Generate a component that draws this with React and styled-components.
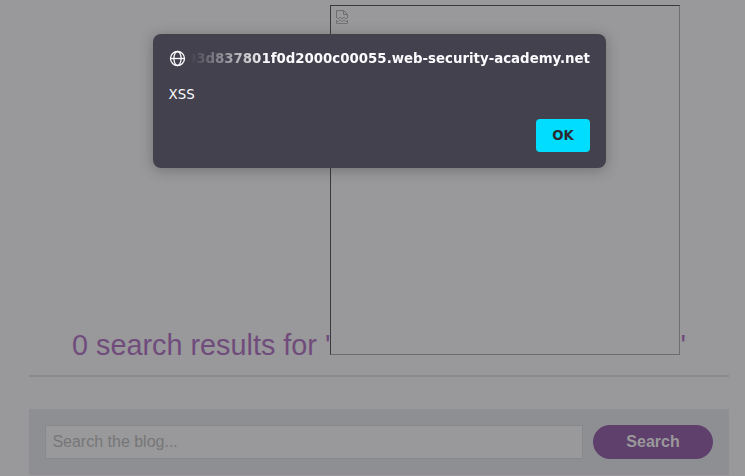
import React from "react";
import styled, { createGlobalStyle } from "styled-components";

const GlobalStyle = createGlobalStyle`
  *, *::before, *::after { box-sizing: border-box; }
  body {
    margin: 0;
    background: #99999b;
    font-family: "Liberation Sans", Arial, sans-serif;
    overflow: hidden;
  }
`;

const Page = styled.main`
  position: relative;
  height: 476px;
  padding: 5px 16px 0 29px;
  overflow: hidden;
`;

const Results = styled.header`
  display: flex;
  justify-content: center;
  align-items: flex-end;
  height: 372px;
  padding-bottom: 20px;
  border-bottom: 2px solid #89898b;
`;

const Title = styled.h1`
  margin: 0;
  display: flex;
  align-items: flex-end;
  color: #704c7c;
  font-size: 28.8px;
  font-weight: 400;
  line-height: 20px;
  white-space: pre;
`;

const BrokenImage = styled.span`
  width: 350px;
  height: 350px;
  padding: 4px 5px;
  border: 1px solid;
  border-color: #39383c #6d6d6e #6d6d6e #39383c;
  line-height: 0;
`;

const SearchBar = styled.form`
  display: flex;
  gap: 10px;
  height: 66px;
  margin-top: 32px;
  padding: 16px;
  background: #8e8f93;
`;

const SearchInput = styled.input`
  flex: 1;
  min-width: 0;
  height: 34px;
  padding: 0 6.4px;
  border: 1px solid #88898c;
  background: #99999b;
  font: 16px "Liberation Sans", Arial, sans-serif;
  outline: none;
  &::placeholder { color: #767677; opacity: 1; }
`;

const SearchButton = styled.button`
  width: 120px;
  height: 34px;
  padding: 0;
  border: 0;
  border-radius: 17px;
  background: #5f406c;
  color: #99999b;
  font: bold 16px "Liberation Sans", Arial, sans-serif;
`;

const Dialog = styled.section`
  position: absolute;
  top: 34px;
  left: 153px;
  width: 453px;
  height: 134px;
  padding: 16px;
  display: flex;
  flex-direction: column;
  border-radius: 8px;
  background: #42414d;
  box-shadow: 0 2px 14px rgba(30, 30, 35, 0.32);
  color: #fbfbfe;
  font-family: "DejaVu Sans", sans-serif;
  font-size: 13.333px;
  line-height: 16px;
`;

const Origin = styled.div`
  display: flex;
  align-items: center;
  gap: 4px;
  height: 17px;
`;

const Host = styled.div`
  flex: 1;
  min-width: 0;
  display: flex;
  justify-content: flex-end;
  font-weight: 700;
  white-space: nowrap;
  mask-image: linear-gradient(to right, transparent, #000 78px);
`;

const Message = styled.p`
  margin: 20px 0 0 -0.4px;
`;

const Actions = styled.div`
  display: flex;
  justify-content: flex-end;
  margin-top: auto;
`;

const OkButton = styled.button`
  width: 54px;
  height: 33px;
  padding: 0;
  border: 0;
  border-radius: 4px;
  background: #00ddff;
  color: #2b2a33;
  font: bold 13.333px "DejaVu Sans", sans-serif;
`;

const GlobeIcon = () => (
  <svg width="17" height="17" viewBox="0 0 17 17" fill="none" stroke="#fbfbfe" strokeWidth="1.3">
    <circle cx="8.5" cy="8.5" r="7" />
    <ellipse cx="8.5" cy="8.5" rx="3.6" ry="7" />
    <path d="M1.5 8.5h14" />
  </svg>
);

const BrokenIcon = () => (
  <svg width="12" height="14" viewBox="0 0 12 14" fill="none" stroke="#6d6d6e">
    <path d="M.5 8V.5h7l4 4V8M7.5.5v4h4" />
    <path d="M.5 7.5l1.5 1.5 2-2 2 2 2-2 2 2 1.5-1.5" strokeWidth=".9" />
    <path d="M.5 10v3.5h11V10M.5 10.5l1.5 1.3 2-2 2 2 2-2 2 2 1.5-1.3" strokeWidth=".9" />
  </svg>
);

export default function App() {
  return (
    <>
      <GlobalStyle />
      <Page>
        <Results>
          <Title>
            {"0 search results for '"}
            <BrokenImage><BrokenIcon /></BrokenImage>
            {"'"}
          </Title>
        </Results>
        <SearchBar>
          <SearchInput placeholder="Search the blog..." />
          <SearchButton type="button">Search</SearchButton>
        </SearchBar>
        <Dialog role="alertdialog">
          <Origin>
            <GlobeIcon />
            <Host>93d837801f0d2000c00055.web-security-academy.net</Host>
          </Origin>
          <Message>XSS</Message>
          <Actions><OkButton type="button">OK</OkButton></Actions>
        </Dialog>
      </Page>
    </>
  );
}
